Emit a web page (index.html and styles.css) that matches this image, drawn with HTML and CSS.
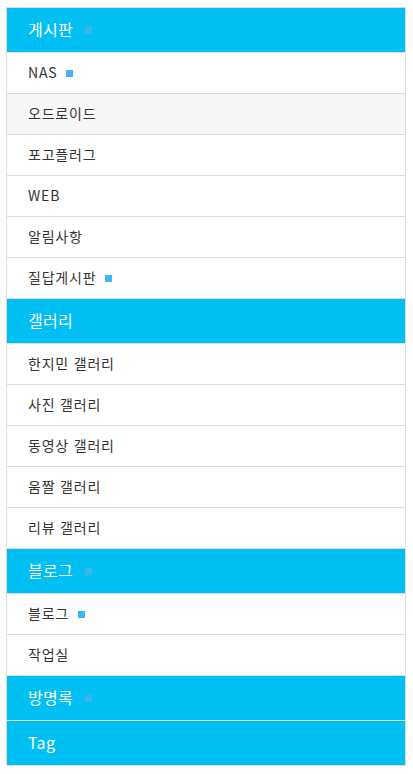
FILE: index.html
```html
<!DOCTYPE html>
<html lang="ko">
<head>
<meta charset="utf-8">
<title>메뉴</title>
<link rel="stylesheet" href="styles.css">
</head>
<body>
<nav class="menu">
  <div class="head">게시판<span class="mark mark-head"></span></div>
  <div class="row">NAS<span class="mark"></span></div>
  <div class="row row-alt">오드로이드</div>
  <div class="row">포고플러그</div>
  <div class="row">WEB</div>
  <div class="row">알림사항</div>
  <div class="row">질답게시판<span class="mark"></span></div>
  <div class="head">갤러리</div>
  <div class="row">한지민 갤러리</div>
  <div class="row">사진 갤러리</div>
  <div class="row">동영상 갤러리</div>
  <div class="row">움짤 갤러리</div>
  <div class="row">리뷰 갤러리</div>
  <div class="head">블로그<span class="mark mark-head"></span></div>
  <div class="row">블로그<span class="mark"></span></div>
  <div class="row">작업실</div>
  <div class="head">방명록<span class="mark mark-head"></span></div>
  <div class="head">Tag</div>
</nav>
</body>
</html>
```

FILE: styles.css
```css
html, body {
  background: #ffffff;
}
body {
  margin: 7px 7px 0 6px;
  font-family: "Noto Sans CJK KR", "Noto Sans", sans-serif;
}
.menu {
  width: 398px;
  border: 1px solid #dddddd;
  border-bottom: none;
  display: flex;
  flex-direction: column;
}
.head, .row {
  display: flex;
  align-items: center;
  padding-left: 21px;
  padding-bottom: 3px;
  box-sizing: border-box;
  border-bottom: 1px solid #dddddd;
}
.head {
  height: 45px;
  background: #00c0f3;
  color: #ffffff;
  font-size: 16px;
  letter-spacing: 0.3px;
}
.row {
  height: 41px;
  background: #ffffff;
  color: #333333;
  font-size: 14px;
  letter-spacing: 0.8px;
}
.row-alt {
  background: #f7f7f7;
}
.mark {
  display: inline-block;
  flex: none;
  width: 7px;
  height: 7px;
  margin-left: 9px;
  margin-top: 4px;
  background: #41b6ee;
}
.mark-head {
  margin-left: 12px;
  background: #3fb2ea;
}
```
